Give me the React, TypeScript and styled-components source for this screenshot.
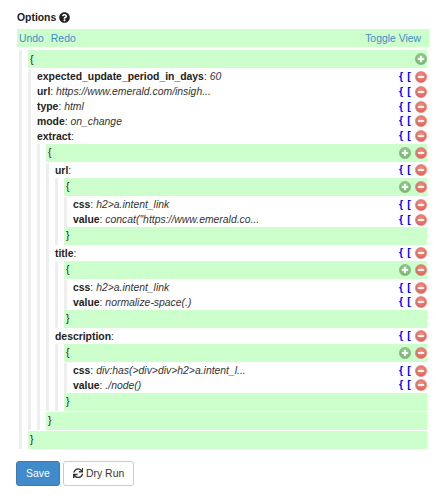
import React from "react";
import styled, { createGlobalStyle } from "styled-components";
import { FaQuestionCircle, FaSync } from "react-icons/fa";

const GlobalStyle = createGlobalStyle`
  html, body {
    margin: 0;
    padding: 0;
    background: #fff;
  }
  body {
    font-family: "Liberation Sans", Arial, sans-serif;
    font-size: 10.4px;
    color: #333;
  }
`;

const Page = styled.div`
  width: 436px;
  height: 500px;
  box-sizing: border-box;
  padding: 10px 7px 0 16px;
  overflow: hidden;
`;

const Title = styled.div`
  display: flex;
  align-items: center;
  gap: 3px;
  height: 15px;
  margin: 0 0 4px 1px;
  font-size: 10.4px;
  font-weight: bold;
  color: #222;
  svg {
    width: 11px;
    height: 11px;
  }
`;

const Toolbar = styled.div`
  display: flex;
  justify-content: space-between;
  align-items: center;
  height: 18px;
  margin-left: 1px;
  padding: 0 8px 0 2px;
  background: #ccffcc;
`;

const Links = styled.div`
  display: flex;
  gap: 7px;
`;

const ToolLink = styled.a`
  color: #428bca;
  cursor: pointer;
`;

const Editor = styled.div`
  margin: 3px 2px 0 3px;
`;

const Rail = styled.div`
  border-left: 3px solid #eee;
  padding-left: 6px;
`;

const Body = styled(Rail)`
  padding-top: 0.4px;
`;

const Brace = styled.div`
  display: flex;
  align-items: center;
  justify-content: space-between;
  height: 18px;
  margin-bottom: 1px;
  padding: 0 0 0 2px;
  background: #ccffcc;
  color: #222;
`;

const Row = styled.div`
  display: flex;
  align-items: center;
  justify-content: space-between;
  height: 14.85px;
  white-space: nowrap;
`;

const Label = styled.div`
  color: #333;
  b {
    color: #222;
  }
`;

const Actions = styled.div`
  display: flex;
  align-items: center;
  gap: 4px;
`;

const Bracket = styled.span`
  width: 4px;
  text-align: center;
  font-size: 10.4px;
  font-weight: bold;
  color: #0000ff;
  line-height: 12px;
`;

const Tree = styled.div`
  & + & {
    margin-top: 0.4px;
  }
`;

const Footer = styled.div`
  display: flex;
  gap: 3px;
  margin-top: 12px;
`;

const Button = styled.button<{ $primary?: boolean }>`
  display: flex;
  align-items: center;
  gap: 3px;
  height: 25px;
  box-sizing: border-box;
  padding: 0 9px;
  border: 1px solid ${(p) => (p.$primary ? "#357ebd" : "#ccc")};
  border-radius: 3px;
  background: ${(p) => (p.$primary ? "#428bca" : "#fff")};
  color: ${(p) => (p.$primary ? "#fff" : "#333")};
  font-family: inherit;
  font-size: 10.4px;
  svg {
    width: 10.4px;
    height: 10.4px;
  }
`;

const RoundIcon: React.FC<{ kind: "add" | "remove" }> = ({ kind }) => {
  const add = kind === "add";
  const id = add ? "greenBall" : "redBall";
  return (
    <svg width="12" height="12" viewBox="0 0 12 12">
      <defs>
        <radialGradient id={id} cx="50%" cy="40%" r="60%">
          <stop offset="0%" stopColor={add ? "#a9d4a2" : "#f29a8e"} />
          <stop offset="100%" stopColor={add ? "#74b06c" : "#dd5a4f"} />
        </radialGradient>
      </defs>
      <circle cx="6" cy="6" r="5.6" fill={`url(#${id})`} stroke={add ? "#8ab585" : "#e08f88"} strokeWidth="0.7" />
      <rect x="2.8" y="5.1" width="6.4" height="1.8" fill="#fff" />
      {add && <rect x="5.1" y="2.8" width="1.8" height="6.4" fill="#fff" />}
    </svg>
  );
};

const Field: React.FC<{ name: string; value?: string }> = ({ name, value }) => (
  <Row>
    <Label>
      <b>{name}</b>: {value && <i>{value}</i>}
    </Label>
    <Actions>
      <Bracket>{"{"}</Bracket>
      <Bracket>[</Bracket>
      <RoundIcon kind="remove" />
    </Actions>
  </Row>
);

const Obj: React.FC<{ root?: boolean; children: React.ReactNode }> = ({ root, children }) => (
  <Rail>
    <Brace>
      {"{"}
      <Actions>
        <RoundIcon kind="add" />
        {!root && <RoundIcon kind="remove" />}
      </Actions>
    </Brace>
    <Body>{children}</Body>
    <Brace>{"}"}</Brace>
  </Rail>
);

const Selector: React.FC<{ name: string; css: string; value: string }> = ({ name, css, value }) => (
  <Tree>
    <Field name={name} />
    <Obj>
      <Field name="css" value={css} />
      <Field name="value" value={value} />
    </Obj>
  </Tree>
);

const App: React.FC = () => (
  <Page>
    <GlobalStyle />
    <Title>
      Options <FaQuestionCircle />
    </Title>
    <Toolbar>
      <Links>
        <ToolLink>Undo</ToolLink>
        <ToolLink>Redo</ToolLink>
      </Links>
      <ToolLink>Toggle View</ToolLink>
    </Toolbar>
    <Editor>
      <Obj root>
        <Field name="expected_update_period_in_days" value="60" />
        <Field name="url" value="https://www.emerald.com/insigh..." />
        <Field name="type" value="html" />
        <Field name="mode" value="on_change" />
        <Field name="extract" />
        <Obj>
          <Selector name="url" css="h2>a.intent_link" value={'concat("https://www.emerald.co...'} />
          <Selector name="title" css="h2>a.intent_link" value="normalize-space(.)" />
          <Selector name="description" css="div:has(>div>div>h2>a.intent_l..." value="./node()" />
        </Obj>
      </Obj>
    </Editor>
    <Footer>
      <Button $primary>Save</Button>
      <Button>
        <FaSync /> Dry Run
      </Button>
    </Footer>
  </Page>
);

export default App;
